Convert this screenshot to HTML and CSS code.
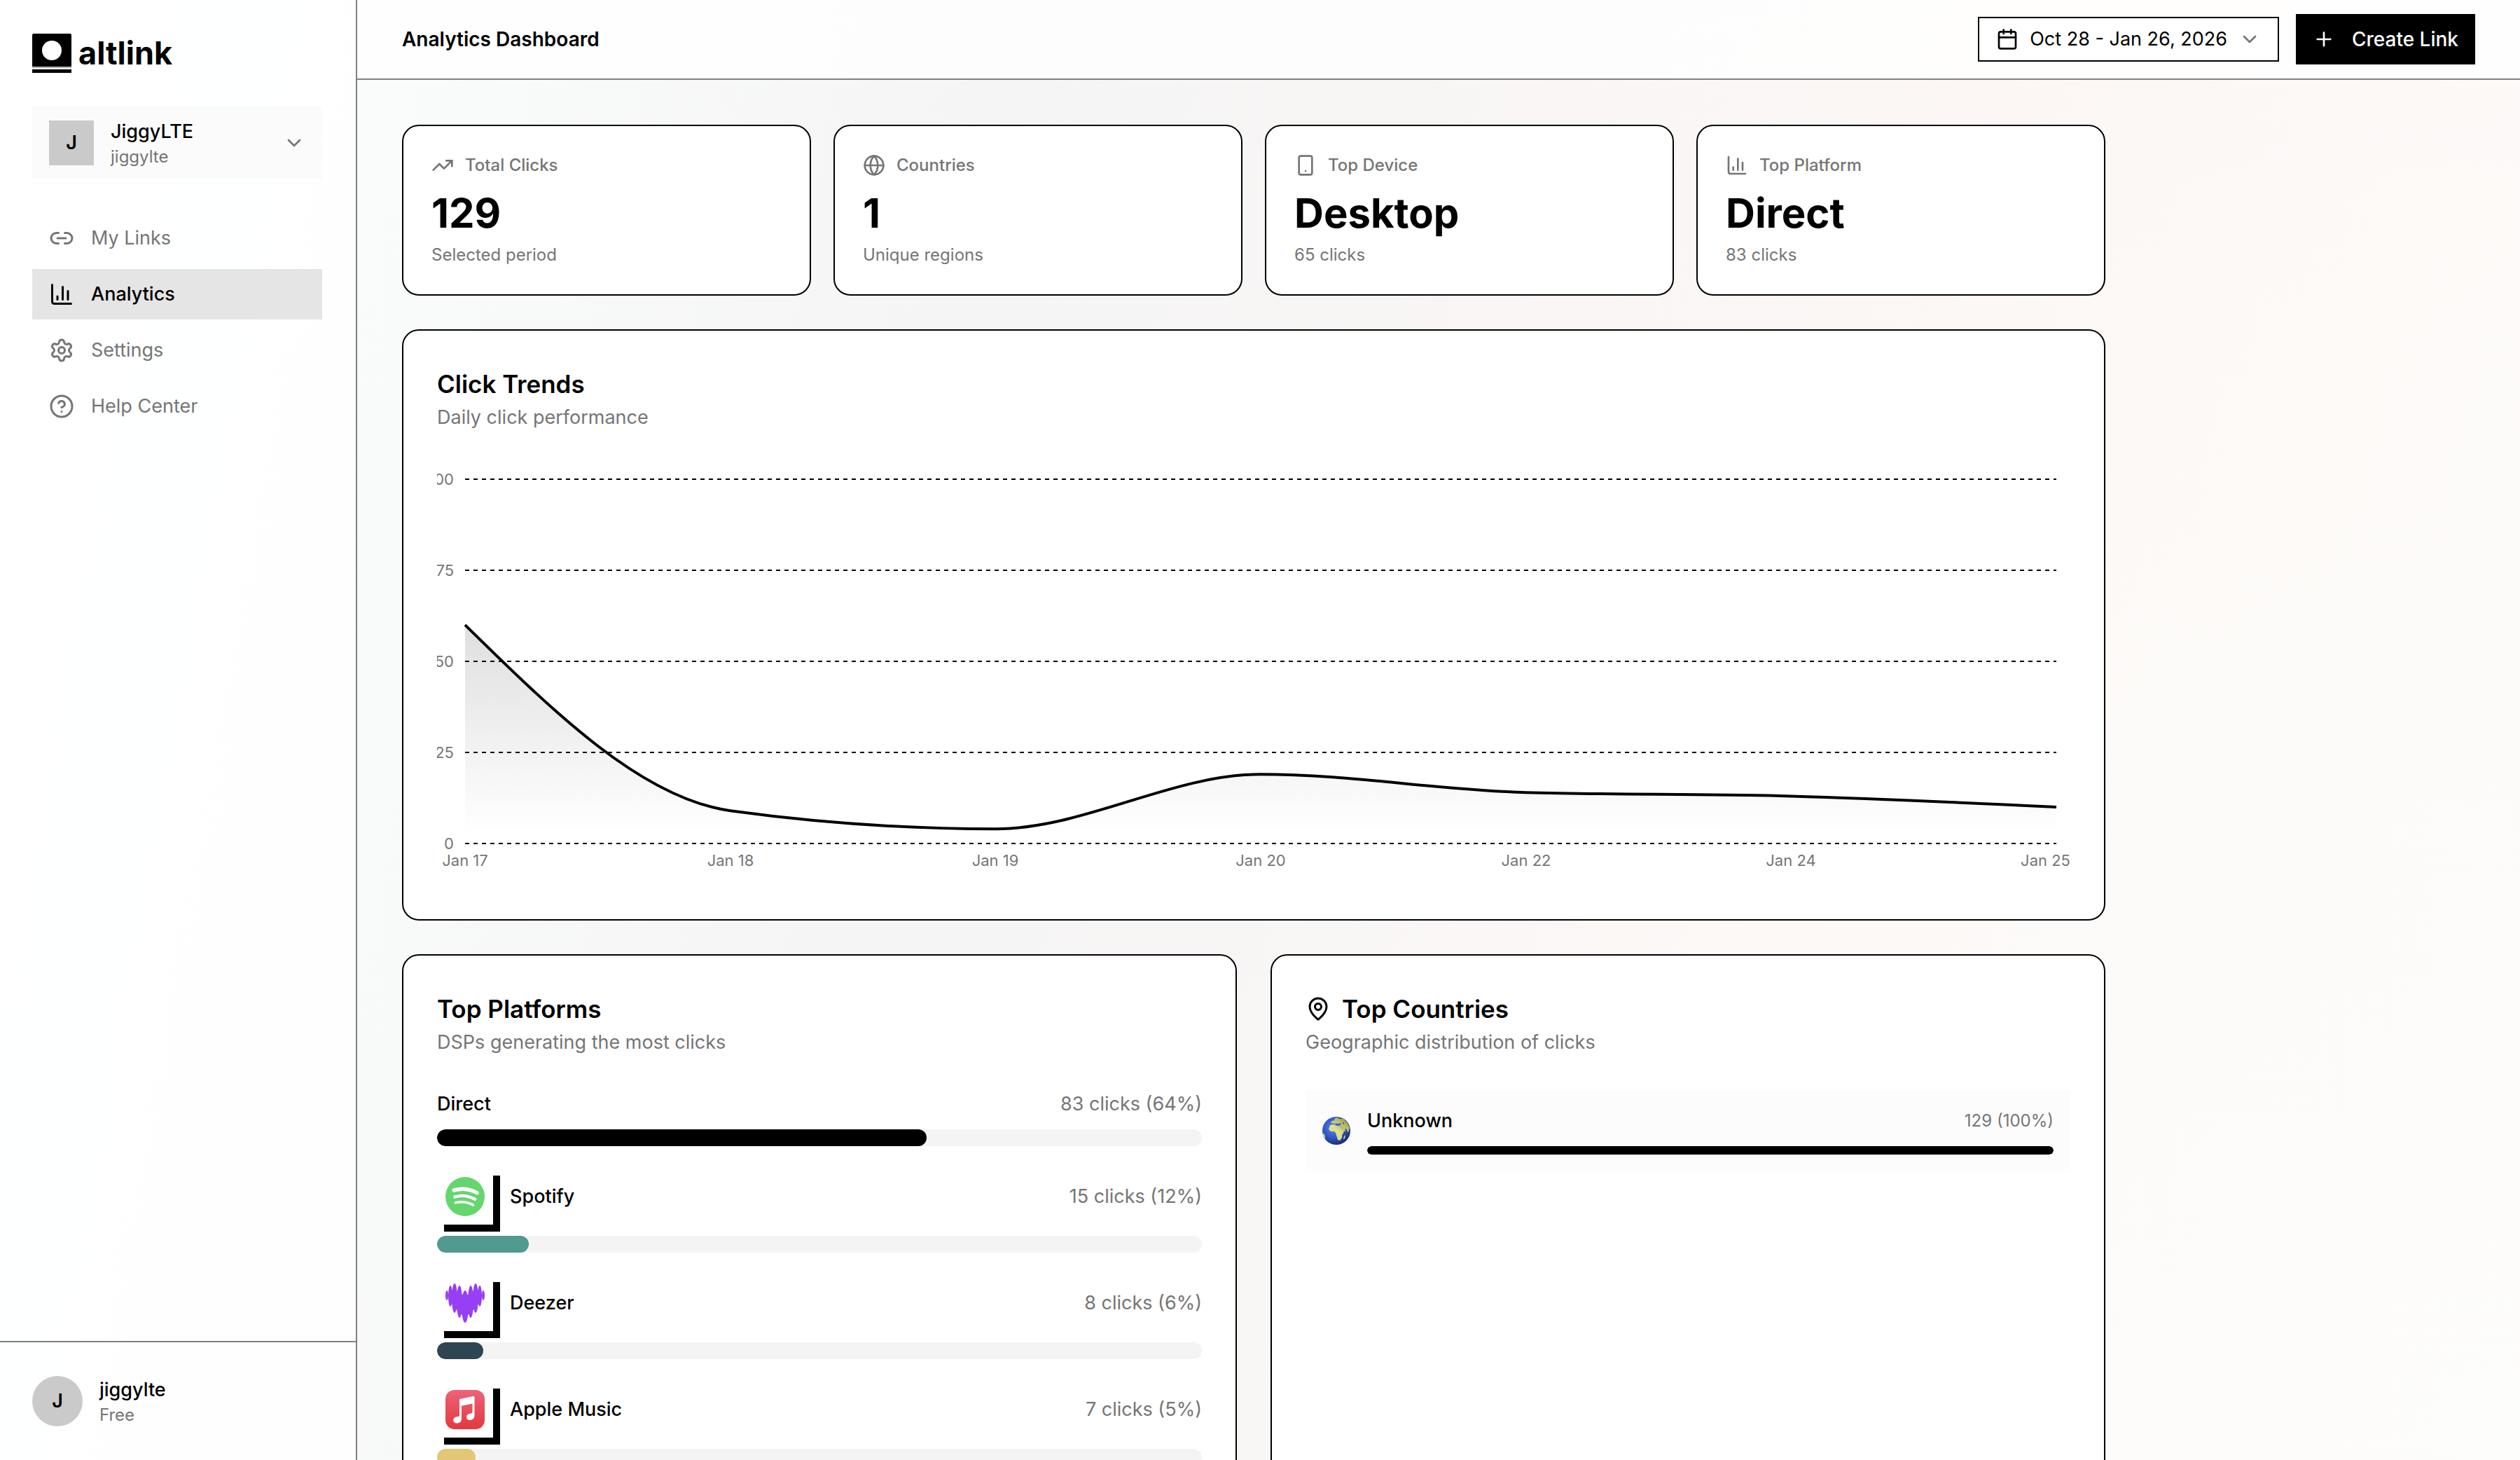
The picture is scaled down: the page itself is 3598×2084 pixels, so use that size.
FILE: index.html
```html
<!DOCTYPE html>
<html lang="en">
<head>
<meta charset="utf-8">
<title>Analytics Dashboard - altlink</title>
<meta name="viewport" content="width=device-width, initial-scale=1">
<link rel="stylesheet" href="styles.css">
</head>
<body>
<svg class="sprite" aria-hidden="true">
  <symbol id="chevron" viewBox="0 0 24 24"><path d="m6 9 6 6 6-6"/></symbol>
  <symbol id="chart" viewBox="0 0 24 24"><path d="M3 3v16a2 2 0 0 0 2 2h16M18 17V9M13 17V5M8 17v-3"/></symbol>
</svg>
<div class="app">
  <aside class="sidebar">
    <div class="sidebar-main">
      <a class="brand" href="#">
        <svg class="brand-mark" viewBox="0 0 56 56" aria-hidden="true">
          <rect width="56" height="48" rx="2"/>
          <rect y="47" width="56" height="2" class="brand-seam"/>
          <rect y="51" width="56" height="5"/>
          <circle cx="28" cy="24" r="14" class="brand-hole"/>
        </svg>
        <span class="brand-name">altlink</span>
      </a>
      <button class="workspace" type="button">
        <span class="avatar avatar-square">J</span>
        <span class="person">
          <span class="person-name">JiggyLTE</span>
          <span class="person-note">jiggylte</span>
        </span>
        <svg class="icon muted"><use href="#chevron"/></svg>
      </button>
      <nav class="nav">
        <a class="nav-item" href="#"><svg class="icon icon-md" viewBox="0 0 24 24"><path d="M9 17H7A5 5 0 0 1 7 7h2M15 7h2a5 5 0 1 1 0 10h-2M8 12h8"/></svg>My Links</a>
        <a class="nav-item active" href="#" aria-current="page"><svg class="icon icon-md"><use href="#chart"/></svg>Analytics</a>
        <a class="nav-item" href="#"><svg class="icon icon-md" viewBox="0 0 24 24"><path d="M9.671 4.136a2.34 2.34 0 0 1 4.659 0 2.34 2.34 0 0 0 3.319 1.915 2.34 2.34 0 0 1 2.33 4.033 2.34 2.34 0 0 0 0 3.831 2.34 2.34 0 0 1-2.33 4.033 2.34 2.34 0 0 0-3.319 1.915 2.34 2.34 0 0 1-4.659 0 2.34 2.34 0 0 0-3.32-1.915 2.34 2.34 0 0 1-2.33-4.033 2.34 2.34 0 0 0 0-3.831A2.34 2.34 0 0 1 6.35 6.051a2.34 2.34 0 0 0 3.319-1.915"/><circle cx="12" cy="12" r="3"/></svg>Settings</a>
        <a class="nav-item" href="#"><svg class="icon icon-md" viewBox="0 0 24 24"><circle cx="12" cy="12" r="10"/><path d="M9.09 9a3 3 0 0 1 5.83 1c0 2-3 3-3 3M12 17h.01"/></svg>Help Center</a>
      </nav>
    </div>
    <div class="account">
      <span class="avatar avatar-round">J</span>
      <span class="person">
        <span class="person-name">jiggylte</span>
        <span class="person-note">Free</span>
      </span>
    </div>
  </aside>

  <div class="page">
    <header class="topbar">
      <h1 class="topbar-title">Analytics Dashboard</h1>
      <div class="topbar-actions">
        <button class="btn btn-outline" type="button">
          <svg class="icon" viewBox="0 0 24 24"><path d="M8 2v4M16 2v4M3 10h18"/><rect x="3" y="4" width="18" height="18" rx="2"/></svg>
          Oct 28 - Jan 26, 2026
          <svg class="icon muted"><use href="#chevron"/></svg>
        </button>
        <button class="btn btn-primary" type="button">
          <svg class="icon" viewBox="0 0 24 24"><path d="M5 12h14M12 5v14"/></svg>
          Create Link
        </button>
      </div>
    </header>

    <main class="content">
      <section class="stats">
        <article class="card stat">
          <h2 class="stat-label"><svg class="icon" viewBox="0 0 24 24"><path d="M16 7h6v6"/><path d="m22 7-8.5 8.5-5-5L2 17"/></svg>Total Clicks</h2>
          <p class="stat-value">129</p>
          <p class="stat-note">Selected period</p>
        </article>
        <article class="card stat">
          <h2 class="stat-label"><svg class="icon" viewBox="0 0 24 24"><circle cx="12" cy="12" r="10"/><path d="M12 2a14.500 14.500 0 0 0 0 20 14.500 14.500 0 0 0 0-20M2 12h20"/></svg>Countries</h2>
          <p class="stat-value">1</p>
          <p class="stat-note">Unique regions</p>
        </article>
        <article class="card stat">
          <h2 class="stat-label"><svg class="icon" viewBox="0 0 24 24"><rect x="5" y="2" width="14" height="20" rx="2"/><path d="M12 18h.01"/></svg>Top Device</h2>
          <p class="stat-value">Desktop</p>
          <p class="stat-note">65 clicks</p>
        </article>
        <article class="card stat">
          <h2 class="stat-label"><svg class="icon"><use href="#chart"/></svg>Top Platform</h2>
          <p class="stat-value">Direct</p>
          <p class="stat-note">83 clicks</p>
        </article>
      </section>

      <section class="card panel">
        <div class="panel-head">
          <h2 class="panel-title">Click Trends</h2>
          <p class="panel-note">Daily click performance</p>
        </div>
        <svg class="trend" viewBox="0 0 2332 600" role="img" aria-label="Daily clicks, Jan 17 to Jan 25">
          <defs>
            <linearGradient id="trend-fade" x1="0" y1="0" x2="0" y2="1">
              <stop offset="5%" stop-color="#000" stop-opacity="0.12"/>
              <stop offset="95%" stop-color="#000" stop-opacity="0"/>
            </linearGradient>
          </defs>
          <path class="trend-grid" d="M40 20H2312M40 150H2312M40 280H2312M40 410H2312M40 540H2312"/>
          <path fill="url(#trend-fade)" d="M40 228C166.200 351.900 292.400 475.900 418.700 493.200C544.900 510.500 671.100 519.200 797.300 519.200C923.600 519.200 1049.800 441.200 1176 441.200C1302.200 441.200 1428.400 463.700 1554.700 467.200C1680.900 470.700 1807.100 468.900 1933.300 472.400C2059.600 475.900 2185.800 481.900 2312 488V540H40Z"/>
          <path class="trend-line" d="M40 228C166.200 351.900 292.400 475.900 418.700 493.200C544.900 510.500 671.100 519.200 797.300 519.200C923.600 519.200 1049.800 441.200 1176 441.200C1302.200 441.200 1428.400 463.700 1554.700 467.200C1680.900 470.700 1807.100 468.900 1933.300 472.400C2059.600 475.900 2185.800 481.900 2312 488"/>
          <g class="trend-tick trend-tick-y">
            <text x="24" y="28">100</text>
            <text x="24" y="158">75</text>
            <text x="24" y="288">50</text>
            <text x="24" y="418">25</text>
            <text x="24" y="548">0</text>
          </g>
          <g class="trend-tick trend-tick-x">
            <text x="40" y="572">Jan 17</text>
            <text x="419" y="572">Jan 18</text>
            <text x="797" y="572">Jan 19</text>
            <text x="1176" y="572">Jan 20</text>
            <text x="1555" y="572">Jan 22</text>
            <text x="1933" y="572">Jan 24</text>
            <text class="trend-tick-last" x="2332" y="572">Jan 25</text>
          </g>
        </svg>
      </section>

      <section class="columns">
        <article class="card panel">
          <div class="panel-head">
            <h2 class="panel-title">Top Platforms</h2>
            <p class="panel-note">DSPs generating the most clicks</p>
          </div>
          <ul class="platforms">
            <li class="platform">
              <div class="platform-row"><span class="platform-name">Direct</span><span class="platform-count">83 clicks (64%)</span></div>
              <div class="track"><div class="fill fill-black" style="width:64%"></div></div>
            </li>
            <li class="platform">
              <div class="platform-row">
                <span class="platform-logo"><svg viewBox="0 0 24 24" aria-hidden="true"><circle cx="12" cy="12" r="12" fill="#65d66e"/><path fill="none" stroke="#fff" stroke-linecap="round" d="M5.200 8.100C9.800 6.900 15 7.400 19.300 9.700" stroke-width="2.300"/><path fill="none" stroke="#fff" stroke-linecap="round" d="M5.700 12.200C9.800 11 14.200 11.500 18.100 13.600" stroke-width="1.900"/><path fill="none" stroke="#fff" stroke-linecap="round" d="M6.100 15.700C9.800 14.900 13.500 15.200 16.900 17.100" stroke-width="1.500"/></svg></span>
                <span class="platform-name">Spotify</span><span class="platform-count">15 clicks (12%)</span>
              </div>
              <div class="track"><div class="fill fill-teal" style="width:12%"></div></div>
            </li>
            <li class="platform">
              <div class="platform-row">
                <span class="platform-logo"><svg viewBox="0 0 56 56" fill="#973ff5" aria-hidden="true"><ellipse cx="2" cy="17" rx="2" ry="7"/><ellipse cx="7" cy="18" rx="3" ry="15"/><ellipse cx="13" cy="21" rx="4" ry="21"/><ellipse cx="20" cy="26" rx="4" ry="23"/><ellipse cx="28" cy="33" rx="5" ry="23"/><ellipse cx="36" cy="26" rx="4" ry="23"/><ellipse cx="43" cy="21" rx="4" ry="21"/><ellipse cx="49" cy="18" rx="3" ry="15"/><ellipse cx="54" cy="17" rx="2" ry="7"/><path d="M7 10 13 8 20 14 28 18 36 14 43 8 49 10V26L43 34 36 42 28 48 20 42 13 34 7 26Z"/></svg></span>
                <span class="platform-name">Deezer</span><span class="platform-count">8 clicks (6%)</span>
              </div>
              <div class="track"><div class="fill fill-navy" style="width:6%"></div></div>
            </li>
            <li class="platform">
              <div class="platform-row">
                <span class="platform-logo"><svg viewBox="0 0 56 56" aria-hidden="true"><defs><linearGradient id="music-bg" x1="0" y1="0" x2="0" y2="1"><stop offset="0" stop-color="#eb6478"/><stop offset="1" stop-color="#e5373f"/></linearGradient></defs><rect width="56" height="56" rx="13" fill="url(#music-bg)"/><path fill="#fff" d="M20 14.500Q20 13 21.500 12.700L39.500 9Q41.500 8.700 41.500 10.500V36C41.500 41 38.500 43 35 43C31.500 43 30 40.800 30 38.700C30 36 32 34.300 35 33.800C37.500 33.400 38.500 33 38.500 31.500V19.500L23 22.700V40.500C23 45.500 20 47.500 16.300 47.500C13 47.500 11.200 45.500 11.200 43.200C11.200 40.500 13.200 38.800 16 38.300C19 37.800 20 37.500 20 35.500Z"/></svg></span>
                <span class="platform-name">Apple Music</span><span class="platform-count">7 clicks (5%)</span>
              </div>
              <div class="track"><div class="fill fill-gold" style="width:5%"></div></div>
            </li>
          </ul>
        </article>

        <article class="card panel">
          <div class="panel-head">
            <h2 class="panel-title"><svg class="icon icon-md" viewBox="0 0 24 24"><path d="M20 10c0 4.993-5.539 10.193-7.399 11.799a1 1 0 0 1-1.202 0C9.539 20.193 4 14.993 4 10a8 8 0 0 1 16 0"/><circle cx="12" cy="10" r="3"/></svg>Top Countries</h2>
            <p class="panel-note">Geographic distribution of clicks</p>
          </div>
          <div class="country">
            <svg class="globe" viewBox="0 0 40 40" aria-hidden="true">
              <defs>
                <radialGradient id="sea" cx="40%" cy="38%" r="62%"><stop offset="0" stop-color="#5f86e6"/><stop offset="0.600" stop-color="#2f57c4"/><stop offset="1" stop-color="#1c2f7c"/></radialGradient>
                <linearGradient id="land" x1="0" y1="1" x2="1" y2="0"><stop offset="0" stop-color="#b6dba0"/><stop offset="0.500" stop-color="#dfe08c"/><stop offset="1" stop-color="#8f8a2e"/></linearGradient>
                <clipPath id="disc"><circle cx="20" cy="20" r="20"/></clipPath>
              </defs>
              <g clip-path="url(#disc)">
                <rect width="40" height="40" fill="url(#sea)"/>
                <path fill="url(#land)" d="M11 12L15 11 19 11.500 20 13 26 13.500 28 17 31 21 29.500 24 28 26 28 30 25 34 22 33 20.500 28 19 23 17 21 12 21 9 18ZM12 9L14 6 18 5 17 3 21 1 24 3 30 3 36 9 39 16 37 23 34 17 32 18 34 21 30 20 27 14 23 12 21 9 18 10 15 9ZM31 28 33 26 32 31 30 32ZM0 23 3 25 4 29 3 33 0 30Z"/>
                <path fill="#3560c8" d="M18 10 22 10.500 26 9 27 11 24 12.500 19 11.500ZM29 8 31 8 31 11 30 11Z"/>
              </g>
            </svg>
            <div class="country-body">
              <div class="country-row"><span class="country-name">Unknown</span><span class="country-count">129 (100%)</span></div>
              <div class="track track-thin"><div class="fill fill-black" style="width:100%"></div></div>
            </div>
          </div>
        </article>
      </section>
    </main>
  </div>
</div>
</body>
</html>
```
FILE: styles.css
```css
:root {
  --ink: #000;
  --muted: #757575;
  --line: #808080;
  --track: #f4f4f4;
}

* { box-sizing: border-box; }

body {
  margin: 0;
  font-family: Inter, "Liberation Sans", sans-serif;
  font-size: 27px;
  line-height: 40px;
  color: var(--ink);
}

h1, h2, p, ul { margin: 0; padding: 0; }
ul { list-style: none; }
a { color: inherit; text-decoration: none; }
button { font: inherit; color: inherit; cursor: pointer; }

.sprite { position: absolute; width: 0; height: 0; }

.app {
  display: flex;
  height: 100vh;
  overflow: hidden;
  background:
    radial-gradient(circle at 100% 100%, rgba(253, 253, 251, 0.9) 0%, rgba(253, 253, 251, 0) 50%),
    linear-gradient(100deg, #fdfffe 0%, #f9fafa 18%, #f5f5f5 36%, #fcf7f5 72%, #fdf9f7 86%, #fdfaf9 100%);
}

.icon {
  flex: none;
  width: 32px;
  height: 32px;
  fill: none;
  stroke: currentColor;
  stroke-width: 2;
  stroke-linecap: round;
  stroke-linejoin: round;
}
.icon-md { width: 36px; height: 36px; }
.muted { color: var(--muted); }

/* Sidebar */
.sidebar {
  flex: none;
  display: flex;
  flex-direction: column;
  justify-content: space-between;
  width: 510px;
  border-right: 2px solid var(--line);
  background: rgba(255, 255, 255, 0.8);
}
.sidebar-main {
  display: flex;
  flex-direction: column;
  gap: 48px;
  padding: 48px 48px 0 46px;
}
.brand { display: flex; align-items: center; gap: 10px; height: 56px; }
.brand-mark { width: 56px; height: 56px; }
.brand-seam { fill: #b0b0b0; }
.brand-hole { fill: #fff; }
.brand-name { font-size: 45px; line-height: 56px; font-weight: 700; }

.workspace {
  display: flex;
  align-items: center;
  gap: 24px;
  padding: 16px 24px;
  border: 0;
  background: #fbfbfb;
  text-align: left;
}
.avatar {
  flex: none;
  display: grid;
  place-items: center;
  background: #cacaca;
  font-weight: 600;
}
.avatar-square { width: 64px; height: 64px; }
.avatar-round { width: 72px; height: 72px; border-radius: 50%; }
.person { flex: 1; display: flex; flex-direction: column; }
.person-name { font-weight: 500; }
.person-note { font-size: 24px; line-height: 32px; color: var(--muted); }

.nav { display: flex; flex-direction: column; gap: 8px; }
.nav-item {
  display: flex;
  align-items: center;
  gap: 24px;
  padding: 16px 24px;
  color: var(--muted);
}
.nav-item.active { background: #e5e5e5; color: var(--ink); font-weight: 500; }

.account {
  display: flex;
  align-items: center;
  gap: 24px;
  padding: 48px 46px;
  border-top: 2px solid var(--line);
}

/* Top bar */
.page { flex: 1; min-width: 0; }
.topbar {
  display: flex;
  align-items: center;
  justify-content: space-between;
  padding: 20px 64px;
  border-bottom: 2px solid var(--line);
  background: rgba(255, 255, 255, 0.8);
}
.topbar-title { font-size: 28px; font-weight: 600; }
.topbar-actions { display: flex; align-items: center; gap: 24px; }
.btn { display: flex; align-items: center; padding: 16px 24px; border: 0; }
.btn-outline { gap: 16px; padding: 10px 24px; border: 2px solid var(--ink); background: #fff; }
.btn-primary { gap: 24px; background: var(--ink); color: #fff; font-size: 28px; font-weight: 500; }

/* Content */
.content {
  display: flex;
  flex-direction: column;
  gap: 48px;
  max-width: 2560px;
  padding: 64px;
}
.card {
  border: 2px solid var(--ink);
  border-radius: 24px;
  background: #fff;
}
.stats { display: grid; grid-template-columns: repeat(4, 1fr); gap: 32px; }
.stat { padding: 40px; }
.stat-label {
  display: flex;
  align-items: center;
  gap: 16px;
  font-size: 24px;
  line-height: 32px;
  font-weight: 500;
  color: var(--muted);
}
.stat-value { margin: 16px 0 8px; font-size: 58px; line-height: 72px; font-weight: 700; }
.stat-note { font-size: 24px; line-height: 32px; color: var(--muted); }

.columns { display: grid; grid-template-columns: 1fr 1fr; gap: 48px; }
.panel { display: flex; flex-direction: column; gap: 48px; padding: 48px; }
.panel-title {
  display: flex;
  align-items: center;
  gap: 16px;
  font-size: 35px;
  line-height: 56px;
  font-weight: 600;
}
.panel-note { color: var(--muted); }

.trend { display: block; width: 100%; overflow: hidden; }
.trend-grid { stroke: var(--ink); stroke-width: 2; stroke-dasharray: 6 6; }
.trend-line { fill: none; stroke: var(--ink); stroke-width: 4; }
.trend-tick { font-size: 22px; fill: var(--muted); }
.trend-tick-y { text-anchor: end; }
.trend-tick-x { text-anchor: middle; }
.trend-tick-last { text-anchor: end; }

.platforms { display: flex; flex-direction: column; gap: 32px; }
.platform { display: flex; flex-direction: column; gap: 16px; }
.platform-row { display: flex; align-items: center; gap: 24px; }
.platform-logo {
  width: 80px;
  height: 80px;
  padding: 12px;
  background: #fff;
  box-shadow: 10px 10px 0 var(--ink);
}
.platform-logo svg { display: block; width: 56px; height: 56px; }
.platform-name { flex: 1; font-weight: 500; }
.platform-count { color: var(--muted); }

.track { height: 24px; border-radius: 12px; background: var(--track); overflow: hidden; }
.track-thin { height: 12px; border-radius: 6px; }
.fill { height: 100%; border-radius: inherit; }
.fill-black { background: var(--ink); }
.fill-teal { background: #509a8f; }
.fill-navy { background: #2e4553; }
.fill-gold { background: #e3c777; }

.country { display: flex; align-items: center; gap: 24px; padding: 24px; background: #fcfcfc; }
.globe { flex: none; width: 40px; height: 40px; }
.country-body { flex: 1; display: flex; flex-direction: column; gap: 16px; }
.country-row { display: flex; align-items: center; justify-content: space-between; }
.country-name { font-weight: 500; }
.country-count { font-size: 24px; color: var(--muted); }
```
